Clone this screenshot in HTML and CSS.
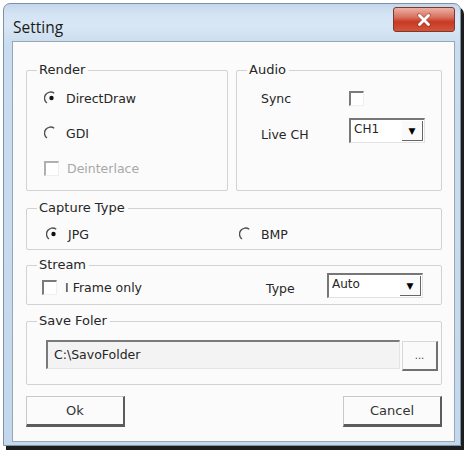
FILE: index.html
```html
<!DOCTYPE html>
<html>
<head>
<meta charset="utf-8">
<link rel="stylesheet" href="styles.css">
</head>
<body>
<div class="window">
  <div class="titlebar">
    <span class="title">Setting</span>
    <div class="close">
      <svg width="20" height="14" viewBox="0 0 20 14"><path d="M5 2 L15 12 M15 2 L5 12" stroke="#7a2a20" stroke-width="4" stroke-linecap="round" opacity="0.35"/><path d="M5.5 2.5 L14.5 11.5 M14.5 2.5 L5.5 11.5" stroke="#fff" stroke-width="2.8" stroke-linecap="round"/></svg>
    </div>
  </div>
  <div class="client">
    <div class="top-row">
      <fieldset class="group render">
        <legend>Render</legend>
        <div class="group-body render-body">
          <div class="option">
            <svg class="radio" viewBox="0 0 14 14"><path d="M10.2 2.2 A6 6 0 0 0 3 12" fill="none" stroke="#505050" stroke-width="1.4"/><circle cx="7.5" cy="7" r="2.2" fill="#111"/></svg>
            <span>DirectDraw</span>
          </div>
          <div class="option">
            <svg class="radio" viewBox="0 0 14 14"><path d="M10.2 2.2 A6 6 0 0 0 3 12" fill="none" stroke="#505050" stroke-width="1.4"/></svg>
            <span>GDI</span>
          </div>
          <div class="option disabled">
            <span class="check"></span>
            <span>Deinterlace</span>
          </div>
        </div>
      </fieldset>
      <fieldset class="group audio">
        <legend>Audio</legend>
        <div class="group-body audio-body">
          <span class="lbl">Sync</span>
          <span class="check"></span>
          <span class="lbl lbl-low">Live CH</span>
          <div class="combo small"><span class="combo-text">CH1</span><span class="combo-btn">&#9660;</span></div>
        </div>
      </fieldset>
    </div>
    <fieldset class="group capture">
      <legend>Capture Type</legend>
      <div class="group-body capture-body">
        <div class="option">
          <svg class="radio" viewBox="0 0 14 14"><path d="M10.2 2.2 A6 6 0 0 0 3 12" fill="none" stroke="#505050" stroke-width="1.4"/><circle cx="7.5" cy="7" r="2.2" fill="#111"/></svg>
          <span>JPG</span>
        </div>
        <div class="option">
          <svg class="radio" viewBox="0 0 14 14"><path d="M10.2 2.2 A6 6 0 0 0 3 12" fill="none" stroke="#505050" stroke-width="1.4"/></svg>
          <span>BMP</span>
        </div>
      </div>
    </fieldset>
    <fieldset class="group stream">
      <legend>Stream</legend>
      <div class="group-body stream-body">
        <div class="option">
          <span class="check"></span>
          <span>I Frame only</span>
        </div>
        <span class="type-lbl">Type</span>
        <div class="combo wide"><span class="combo-text">Auto</span><span class="combo-btn">&#9660;</span></div>
      </div>
    </fieldset>
    <fieldset class="group save">
      <legend>Save Foler</legend>
      <div class="group-body save-body">
        <div class="path">C:\SavoFolder</div>
        <div class="browse">...</div>
      </div>
    </fieldset>
    <div class="buttons">
      <div class="btn">Ok</div>
      <div class="btn">Cancel</div>
    </div>
  </div>
</div>
</body>
</html>
```
FILE: styles.css
```css
html, body {
  margin: 0;
  padding: 0;
}
body {
  width: 465px;
  height: 451px;
  background: #ffffff;
  overflow: hidden;
  font-family: "DejaVu Sans", "Liberation Sans", sans-serif;
  font-size: 12.5px;
  color: #262626;
}
.window {
  margin: 3px 0 0 3px;
  width: 458px;
  height: 443px;
  box-sizing: border-box;
  border: 1px solid #7f93a8;
  border-radius: 7px 7px 0 0;
  background: linear-gradient(#c3d6ea 0px, #d4e4f4 10px, #d9e7f5 22px, #cadcef 40px, #c4d8ed 100%);
  padding: 0 5px 5px 8px;
  display: flex;
  flex-direction: column;
  box-shadow: 3px 4px 0 #1c1c1c;
}
.titlebar {
  height: 37px;
  display: flex;
  align-items: flex-start;
  justify-content: space-between;
  flex: none;
}
.title {
  font-family: "Open Sans", "Noto Sans", sans-serif;
  font-size: 15.5px;
  line-height: 20px;
  color: #1b1b1b;
  margin-left: 1px;
  margin-top: 13px;
}
.close {
  width: 62px;
  height: 25px;
  margin-top: 3px;
  box-sizing: border-box;
  border: 1px solid #7a3a30;
  border-radius: 3px;
  background: linear-gradient(#eab2a4 0%, #d9715e 40%, #c63a26 60%, #d45438 100%);
  display: flex;
  align-items: center;
  justify-content: center;
}
.client {
  flex: 1;
  background: #fbfbfb;
  border: 1px solid #9aa6b3;
  padding: 20px 12px 14px 13px;
  display: flex;
  flex-direction: column;
}
.group {
  margin: 0;
  border: 1px solid #d2d2d2;
  border-radius: 2px;
  padding: 0;
  min-width: 0;
}
.group legend {
  margin-left: 10px;
  padding: 0 3px 0 2px;
  line-height: 16px;
  font-size: 13px;
  color: #262626;
}
.top-row {
  display: flex;
  gap: 8px;
}
.render {
  width: 202px;
  box-sizing: border-box;
}
.render-body {
  padding: 10px 10px 12px 17px;
  display: flex;
  flex-direction: column;
  gap: 15px;
}
.audio {
  flex: 1;
}
.audio-body {
  padding: 8px 10px 10px 24px;
  display: grid;
  grid-template-columns: 88px 76px;
  grid-template-rows: 25px 25px;
  row-gap: 7px;
  align-items: center;
}
.option {
  display: flex;
  align-items: center;
  height: 20px;
  gap: 8px;
}
.radio {
  width: 14px;
  height: 14px;
  flex: none;
}
.check {
  width: 15px;
  height: 15px;
  box-sizing: border-box;
  flex: none;
  border-top: 2px solid #7b7b7b;
  border-left: 2px solid #7b7b7b;
  border-right: 1px solid #efefef;
  border-bottom: 1px solid #efefef;
  background: #fff;
}
.disabled {
  color: #a8a8a8;
}
.disabled .check {
  border-top-color: #b0b0b0;
  border-left-color: #b0b0b0;
}
.lbl-low {
  margin-top: 8px;
}
.combo {
  height: 25px;
  box-sizing: border-box;
  background: #fff;
  border-top: 2px solid #777;
  border-left: 2px solid #777;
  border-right: 1px solid #e2e2e2;
  border-bottom: 1px solid #e2e2e2;
  display: flex;
  justify-content: space-between;
  font-size: 12px;
}
.combo.small {
  width: 76px;
}
.combo.wide {
  width: 96px;
}
.combo-text {
  padding: 2px 0 0 3px;
}
.combo-btn {
  width: 21px;
  margin: 1px 1px 1px 0;
  box-sizing: border-box;
  border-right: 1px solid #666;
  border-bottom: 1px solid #666;
  background: #fafafa;
  font-size: 9px;
  color: #000;
  display: flex;
  align-items: center;
  justify-content: center;
}
.capture {
  margin-top: 9px;
}
.capture-body {
  padding: 8px 10px 5px 19px;
  display: grid;
  grid-template-columns: 193px 1fr;
}
.stream {
  margin-top: 7px;
}
.stream-body {
  padding: 0 16px 6px 15px;
  display: flex;
  align-items: center;
  height: 25px;
}
.stream-body .option {
  width: 224px;
  margin-top: 4px;
}
.type-lbl {
  width: 61px;
  margin-top: 6px;
}
.save {
  margin-top: 8px;
}
.save-body {
  padding: 11px 3px 13px 19px;
  display: flex;
  gap: 2px;
}
.path {
  flex: 1;
  height: 29px;
  box-sizing: border-box;
  border-top: 2px solid #7a7a7a;
  border-left: 2px solid #7a7a7a;
  border-right: 1px solid #e4e4e4;
  border-bottom: 1px solid #e4e4e4;
  background: #f3f3f3;
  padding: 5px 0 0 6px;
  font-size: 12.5px;
}
.browse {
  width: 36px;
  height: 30px;
  margin-top: 1px;
  box-sizing: border-box;
  border: 1px solid #d8d8d8;
  border-right: 2px solid #707070;
  border-bottom: 2px solid #707070;
  background: #fafafa;
  display: flex;
  align-items: center;
  justify-content: center;
  font-size: 10px;
  color: #444;
}
.buttons {
  margin-top: 11px;
  display: flex;
  justify-content: space-between;
}
.btn {
  width: 99px;
  height: 31px;
  box-sizing: border-box;
  border: 1px solid #c8c8c8;
  border-right: 2px solid #5c5c5c;
  border-bottom: 3px solid #5c5c5c;
  background: #fbfbfb;
  display: flex;
  align-items: center;
  justify-content: center;
  font-size: 13px;
  color: #333;
}
```
